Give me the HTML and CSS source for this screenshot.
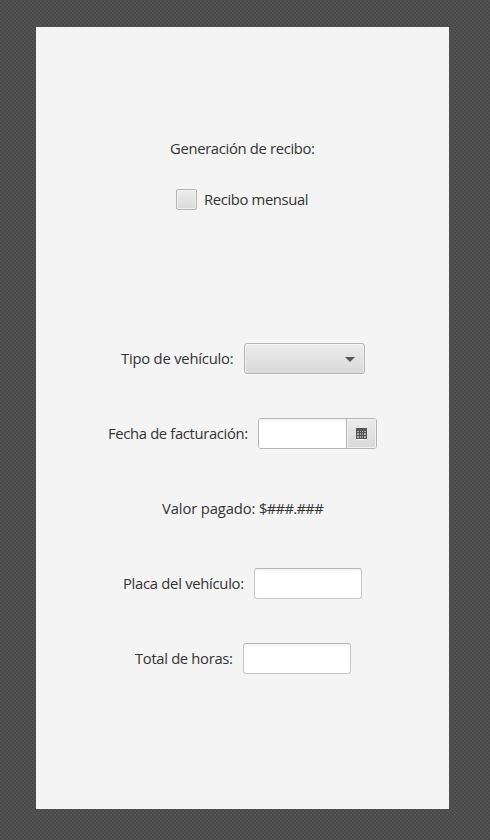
FILE: index.html
```html
<!DOCTYPE html>
<html lang="es">
<head>
<meta charset="utf-8">
<title>Generación de recibo</title>
<link rel="stylesheet" href="styles.css">
</head>
<body>
<main class="panel">
  <div class="row heading"><span class="label w-heading">Generación de recibo:</span></div>
  <label class="row monthly"><span class="check"></span><span class="label w-monthly">Recibo mensual</span></label>
  <div class="row type"><span class="label w-type">Tipo de vehículo:</span>
    <div class="combo"><svg width="10" height="5" viewBox="0 0 10 5"><path d="M0 0h10L5 5z" fill="#565656"/></svg></div>
  </div>
  <div class="row date"><span class="label w-date">Fecha de facturación:</span>
    <div class="picker"><div class="picker-text"></div><div class="picker-button">
      <svg width="11" height="12" viewBox="0 0 11 12" shape-rendering="crispEdges"><path d="M0 11h11v1H0z" fill="#fff"/><path d="M0 0h11v11H0z" fill="#555"/><path d="M1 3h2v1H1zM4 3h1v1H4zM6 3h1v1H6zM8 3h2v1H8zM1 5h2v2H1zM4 5h1v2H4zM6 5h1v2H6zM8 5h2v2H8zM1 8h2v2H1zM4 8h1v2H4zM6 8h1v2H6zM8 8h2v2H8z" fill="#aaa"/></svg>
    </div></div>
  </div>
  <div class="row value"><span class="label w-value">Valor pagado: <span class="amount">$###.###</span></span></div>
  <div class="row plate"><span class="label w-plate">Placa del vehículo:</span><input class="field" type="text"></div>
  <div class="row hours"><span class="label w-hours">Total de horas:</span><input class="field" type="text"></div>
</main>
</body>
</html>
```
FILE: styles.css
```css
* { box-sizing: border-box; }
body {
  margin: 0;
  height: 840px;
  padding: 27px 41px 31px 36px;
  overflow: hidden;
  background: repeating-conic-gradient(#494949 0 25%, #535353 0 50%) 0 0 / 4px 4px;
  font-family: "Open Sans", "Noto Sans", sans-serif;
  font-size: 14.8px;
  color: #333;
}
.panel {
  width: 413px;
  height: 782px;
  padding-top: 106px;
  background: #f4f4f4;
}
.row {
  display: flex;
  align-items: center;
  height: 31px;
  margin-bottom: 44px;
}
.label { flex: none; padding-bottom: 2px; white-space: nowrap; line-height: 20px; }
.heading { padding-left: 134px; margin-bottom: 20px; }
.monthly { padding-left: 140px; margin-bottom: 128px; }
.type { padding-left: 85px; }
.date { padding-left: 72px; }
.value { padding-left: 126px; }
.plate { padding-left: 87px; }
.hours { padding-left: 99px; }
.w-heading { width: 145px; letter-spacing: -0.33px; }
.w-monthly { width: 105px; letter-spacing: -0.36px; }
.w-type { width: 123px; letter-spacing: -0.22px; }
.w-date { width: 150px; letter-spacing: -0.34px; }
.w-value { width: 162px; letter-spacing: -0.13px; }
.amount { letter-spacing: -0.7px; }
.w-plate { width: 131px; letter-spacing: -0.28px; }
.w-hours { width: 108px; letter-spacing: -0.33px; }
.check {
  width: 21px;
  height: 21px;
  margin-right: 7px;
  border: 1px solid #b5b5b5;
  border-radius: 2px;
  background: linear-gradient(#ececec, #dadada);
  box-shadow: inset 0 0 0 1px #f0f0f0;
}
.combo {
  display: flex;
  align-items: center;
  justify-content: flex-end;
  width: 121px;
  height: 31px;
  padding: 1px 9px 0 0;
  border: 1px solid #b5b5b5;
  border-radius: 3px;
  background: linear-gradient(#ececec, #d9d9d9);
  box-shadow: inset 0 1px #f7f7f7, inset 1px 0 #eee, inset -1px 0 #eee, 0 1px #fafafa;
}
.picker {
  display: flex;
  width: 119px;
  height: 31px;
  border: 1px solid #b5b5b5;
  border-radius: 3px;
  overflow: hidden;
}
.picker-text {
  width: 87px;
  background: linear-gradient(#f2f2f2, #fff 4px);
}
.picker-button {
  display: flex;
  align-items: center;
  justify-content: center;
  width: 30px;
  border-left: 1px solid #b5b5b5;
  background: linear-gradient(#ececec, #d9d9d9);
  box-shadow: inset 0 0 0 1px #f1f1f1;
}
.field {
  width: 108px;
  height: 31px;
  padding: 0 8px;
  border: 1px solid #c8c8c8;
  border-top-color: #b5b5b5;
  border-radius: 3px;
  background: linear-gradient(#f2f2f2, #fff 4px);
  font: inherit;
}
```
